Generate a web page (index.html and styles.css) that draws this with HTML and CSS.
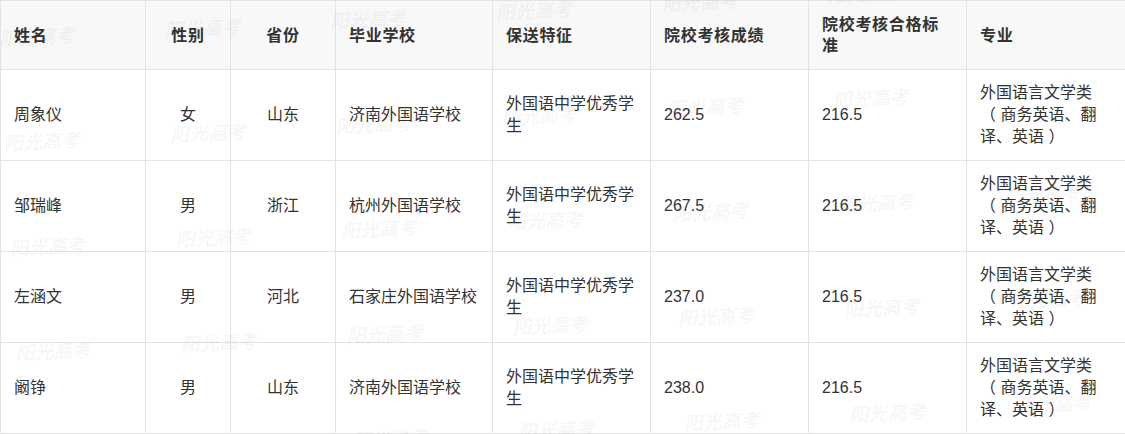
FILE: index.html
```html
<!DOCTYPE html>
<html lang="zh-CN">
<head>
<meta charset="utf-8">
<title>保送生名单</title>
<link rel="stylesheet" href="styles.css">
</head>
<body>
<div class="page">
  <table class="list">
    <colgroup>
      <col class="c-name"><col class="c-sex"><col class="c-prov"><col class="c-school"><col class="c-feat"><col class="c-score"><col class="c-std"><col class="c-major">
    </colgroup>
    <thead>
      <tr>
        <th>姓名</th>
        <th class="center">性别</th>
        <th class="center">省份</th>
        <th>毕业学校</th>
        <th>保送特征</th>
        <th>院校考核成绩</th>
        <th>院校考核合格标准</th>
        <th class="last">专业</th>
      </tr>
    </thead>
    <tbody>
      <tr>
        <td>周象仪</td>
        <td class="center">女</td>
        <td class="center">山东</td>
        <td>济南外国语学校</td>
        <td>外国语中学优秀学生</td>
        <td>262.5</td>
        <td>216.5</td>
        <td class="last">外国语言文学类（ 商务英语、翻译、英语 ）</td>
      </tr>
      <tr>
        <td>邹瑞峰</td>
        <td class="center">男</td>
        <td class="center">浙江</td>
        <td>杭州外国语学校</td>
        <td>外国语中学优秀学生</td>
        <td>267.5</td>
        <td>216.5</td>
        <td class="last">外国语言文学类（ 商务英语、翻译、英语 ）</td>
      </tr>
      <tr>
        <td>左涵文</td>
        <td class="center">男</td>
        <td class="center">河北</td>
        <td>石家庄外国语学校</td>
        <td>外国语中学优秀学生</td>
        <td>237.0</td>
        <td>216.5</td>
        <td class="last">外国语言文学类（ 商务英语、翻译、英语 ）</td>
      </tr>
      <tr>
        <td>阚铮</td>
        <td class="center">男</td>
        <td class="center">山东</td>
        <td>济南外国语学校</td>
        <td>外国语中学优秀学生</td>
        <td>238.0</td>
        <td>216.5</td>
        <td class="last">外国语言文学类（ 商务英语、翻译、英语 ）</td>
      </tr>
    </tbody>
  </table>
  <div class="wm-layer" aria-hidden="true">
    <div class="wm-grid">
      <span class="wm">阳光高考</span><span class="wm">阳光高考</span><span class="wm">阳光高考</span><span class="wm">阳光高考</span><span class="wm">阳光高考</span><span class="wm">阳光高考</span><span class="wm">阳光高考</span>
      <span class="wm">阳光高考</span><span class="wm">阳光高考</span><span class="wm">阳光高考</span><span class="wm">阳光高考</span><span class="wm">阳光高考</span><span class="wm">阳光高考</span><span class="wm">阳光高考</span>
      <span class="wm">阳光高考</span><span class="wm">阳光高考</span><span class="wm">阳光高考</span><span class="wm">阳光高考</span><span class="wm">阳光高考</span><span class="wm">阳光高考</span><span class="wm">阳光高考</span>
      <span class="wm">阳光高考</span><span class="wm">阳光高考</span><span class="wm">阳光高考</span><span class="wm">阳光高考</span><span class="wm">阳光高考</span><span class="wm">阳光高考</span><span class="wm">阳光高考</span>
      <span class="wm">阳光高考</span><span class="wm">阳光高考</span><span class="wm">阳光高考</span><span class="wm">阳光高考</span><span class="wm">阳光高考</span><span class="wm">阳光高考</span><span class="wm">阳光高考</span>
    </div>
  </div>
</div>
</body>
</html>
```

FILE: styles.css
```css
html, body {
  margin: 0;
  padding: 0;
  background: #ffffff;
}

.page {
  position: relative;
  width: 1125px;
  height: 434px;
  overflow: hidden;
}

.list {
  width: 1125px;
  table-layout: fixed;
  border-collapse: collapse;
  font-family: "Liberation Sans", "Noto Sans CJK SC", sans-serif;
  font-size: 16px;
  line-height: 22px;
  color: #333333;
}

.c-name { width: 145px; }
.c-sex { width: 85px; }
.c-prov { width: 105px; }
.c-school { width: 157px; }
.c-feat { width: 158px; }
.c-score { width: 158px; }
.c-std { width: 158px; }
.c-major { width: 159px; }

.list th,
.list td {
  border: 1px solid #e3e3e3;
  padding: 0 13px;
  text-align: left;
  vertical-align: middle;
}

.list th {
  height: 68px;
  background: #f8f8f8;
  font-weight: bold;
  letter-spacing: 0.7px;
  line-height: 21px;
}

.list td {
  height: 90px;
}

.list .center {
  text-align: center;
}

.list .last {
  padding-right: 20px;
}

.wm-layer {
  position: absolute;
  inset: 0;
  overflow: hidden;
  pointer-events: none;
}

.wm-grid {
  position: absolute;
  left: -2px;
  top: 28px;
  display: grid;
  grid-template-columns: repeat(7, 166px);
  grid-auto-rows: 105px;
  transform: rotate(-3deg);
  transform-origin: 0 0;
}

.wm {
  font-family: "Noto Sans CJK SC", sans-serif;
  font-size: 19px;
  line-height: 1;
  font-weight: bold;
  font-style: italic;
  color: rgba(0, 0, 0, 0.055);
  white-space: nowrap;
}
```
